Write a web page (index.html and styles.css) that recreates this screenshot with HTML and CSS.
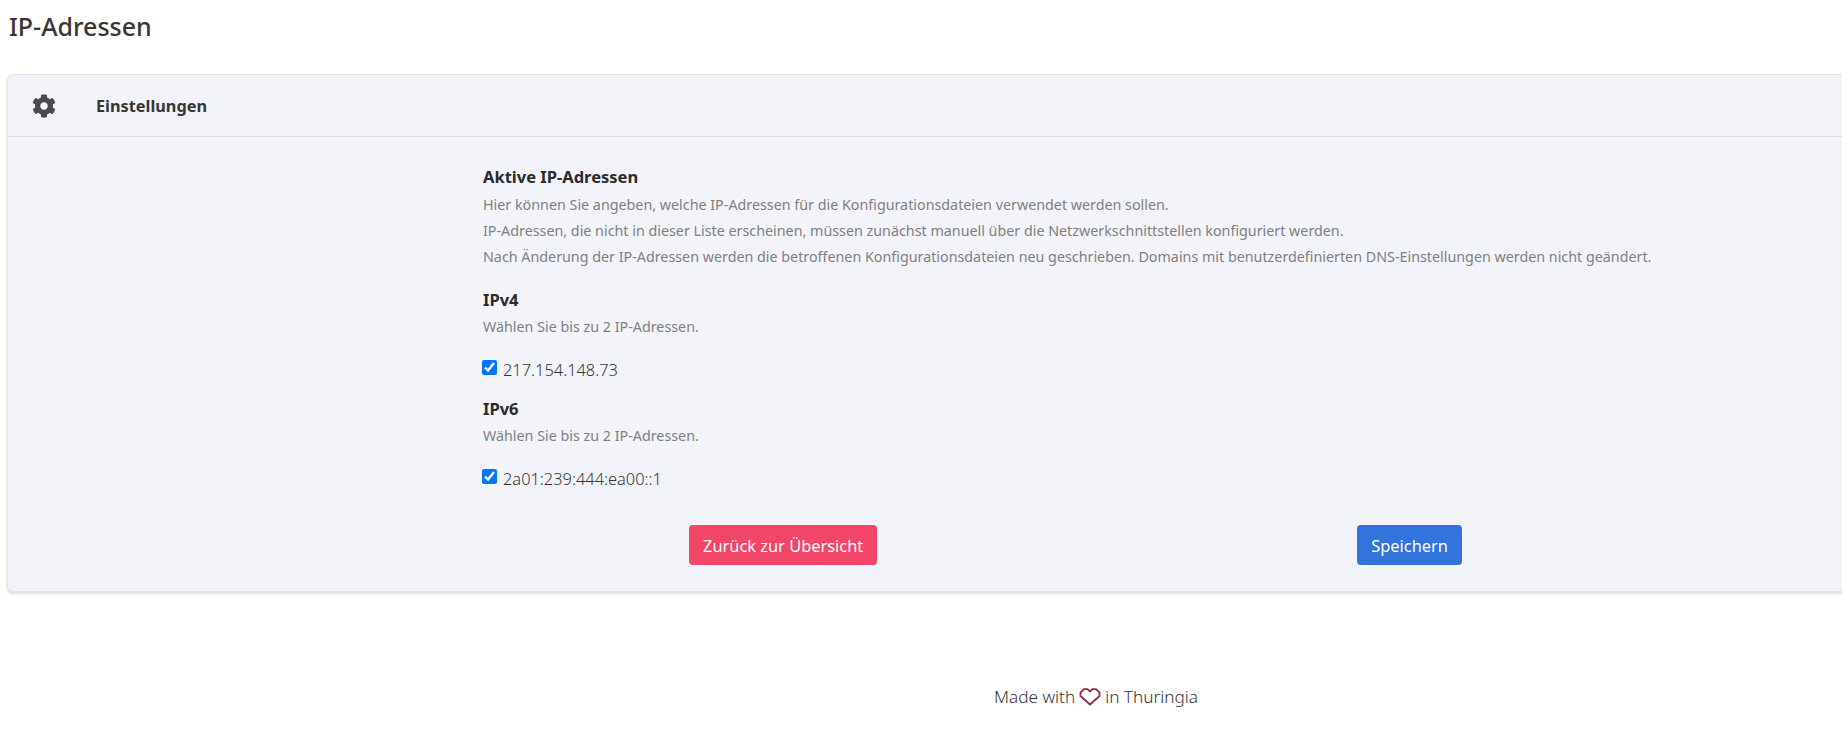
FILE: index.html
```html
<!DOCTYPE html>
<html lang="de">
<head>
  <meta charset="UTF-8" />
  <title>IP-Adressen</title>
  <link rel="stylesheet" href="styles.css">
</head>
<body>
  <div class="page">
    <h1>IP-Adressen</h1>

    <form class="card">
      <div class="card-header">
        <svg class="gear" viewBox="0 0 512 512"><path d="M487.4 315.7l-42.6-24.6c4.3-23.2 4.3-47 0-70.2l42.6-24.6c4.9-2.8 7.1-8.6 5.5-14-11.1-35.6-30-67.8-54.7-94.6-3.8-4.1-10-5.1-14.8-2.3L380.8 110c-17.9-15.4-38.5-27.3-60.8-35.1V25.8c0-5.6-3.9-10.5-9.4-11.7-36.7-8.2-74.3-7.8-109.2 0-5.5 1.2-9.4 6.1-9.4 11.7V75c-22.2 7.9-42.8 19.8-60.8 35.1L88.7 85.5c-4.9-2.8-11-1.9-14.8 2.3-24.7 26.7-43.6 58.9-54.7 94.6-1.7 5.4.6 11.2 5.5 14L67.3 221c-4.3 23.2-4.3 47 0 70.2l-42.6 24.6c-4.9 2.8-7.1 8.6-5.5 14 11.1 35.6 30 67.8 54.7 94.6 3.8 4.1 10 5.1 14.8 2.3l42.6-24.6c17.9 15.4 38.5 27.3 60.8 35.1v49.2c0 5.6 3.9 10.5 9.4 11.7 36.7 8.2 74.3 7.8 109.2 0 5.5-1.2 9.4-6.1 9.4-11.7v-49.2c22.2-7.9 42.8-19.8 60.8-35.1l42.6 24.6c4.9 2.8 11 1.9 14.8-2.3 24.7-26.7 43.6-58.9 54.7-94.6 1.5-5.5-.7-11.3-5.6-14.1zM256 336c-44.1 0-80-35.9-80-80s35.9-80 80-80 80 35.9 80 80-35.9 80-80 80z"/></svg>
        <span class="card-title">Einstellungen</span>
      </div>

      <div class="card-body">
        <h2>Aktive IP-Adressen</h2>
        <p class="hint">Hier können Sie angeben, welche IP-Adressen für die Konfigurationsdateien verwendet werden sollen.</p>
        <p class="hint">IP-Adressen, die nicht in dieser Liste erscheinen, müssen zunächst manuell über die Netzwerkschnittstellen konfiguriert werden.</p>
        <p class="hint">Nach Änderung der IP-Adressen werden die betroffenen Konfigurationsdateien neu geschrieben. Domains mit benutzerdefinierten DNS-Einstellungen werden nicht geändert.</p>

        <h3 class="first">IPv4</h3>
        <p class="hint">Wählen Sie bis zu 2 IP-Adressen.</p>
        <label class="check"><input type="checkbox" checked /> <span>217.154.148.73</span></label>

        <h3>IPv6</h3>
        <p class="hint">Wählen Sie bis zu 2 IP-Adressen.</p>
        <label class="check"><input type="checkbox" checked /> <span>2a01:239:444:ea00::1</span></label>

        <div class="actions">
          <button type="button" class="btn btn-back">Zurück zur Übersicht</button>
          <button type="submit" class="btn btn-save">Speichern</button>
        </div>
      </div>
    </form>

    <footer class="footer">
      Made with
      <svg class="heart" viewBox="0 0 22 18"><path d="M11 16.500 1.500 8V4.500L5 1.200h3.500L11 3.500l2.500-2.300H17l3.500 3.300V8z"/></svg>
      in Thuringia
    </footer>
  </div>
</body>
</html>
```

FILE: styles.css
```css
html, body {
  margin: 0;
  height: 100%;
  overflow: hidden;
  background: white;
}

body {
  font-family: "Noto Sans", sans-serif;
  color: #363636;
}

.page {
  width: 2192px;
}

h1 {
  margin: 0;
  padding: 10px 0 0 9px;
  font-size: 25px;
  line-height: 32px;
  font-weight: 500;
  color: #363636;
}

.card {
  margin: 32px 7px 0;
  background-color: #f2f4f9;
  border: 1px solid #e3e4ea;
  border-radius: 6px;
  box-shadow: 0 2px 3px rgba(10, 10, 10, 0.15);
}

.card-header {
  display: flex;
  align-items: center;
  height: 61px;
  border-bottom: 1px solid #dcdde3;
}

.gear {
  width: 24px;
  height: 24px;
  margin-left: 24px;
  fill: #4a4a4a;
}

.card-title {
  margin-left: 40px;
  font-size: 16.300px;
  font-weight: 700;
}

.card-body {
  padding: 28px 0 26px 475px;
}

h2 {
  margin: 0 0 3px;
  font-size: 16.500px;
  line-height: 24px;
  font-weight: 700;
  color: #2b2b2b;
}

h3 {
  margin: 0 0 2px;
  font-size: 16.500px;
  line-height: 24px;
  font-weight: 700;
  color: #2b2b2b;
}

h3.first {
  margin-top: 18px;
}

.hint {
  margin: 0;
  font-size: 14.300px;
  line-height: 26px;
  color: #808080;
}

.check {
  display: flex;
  align-items: center;
  gap: 6px;
  margin: 15px 0 14px;
  height: 28px;
  font-size: 16.400px;
  font-weight: 300;
}

.check input {
  width: 15px;
  height: 15px;
  margin: -3px 0 0 -1px;
}

.actions {
  display: flex;
  margin-top: 33px;
  padding-left: 206px;
  gap: 480px;
}

.btn {
  height: 40px;
  padding: 0 14px;
  border: none;
  border-radius: 4px;
  color: white;
  font-family: inherit;
  font-size: 16.400px;
}

.btn-back {
  background-color: #f14668;
}

.btn-save {
  background-color: #3273dc;
}

.footer {
  display: flex;
  justify-content: center;
  align-items: center;
  gap: 4px;
  margin-top: 93px;
  font-size: 17.200px;
  font-weight: 300;
  line-height: 24px;
}

.heart {
  width: 22px;
  height: 18px;
  fill: none;
  stroke: #8e2f45;
  stroke-width: 1.800;
}
```
